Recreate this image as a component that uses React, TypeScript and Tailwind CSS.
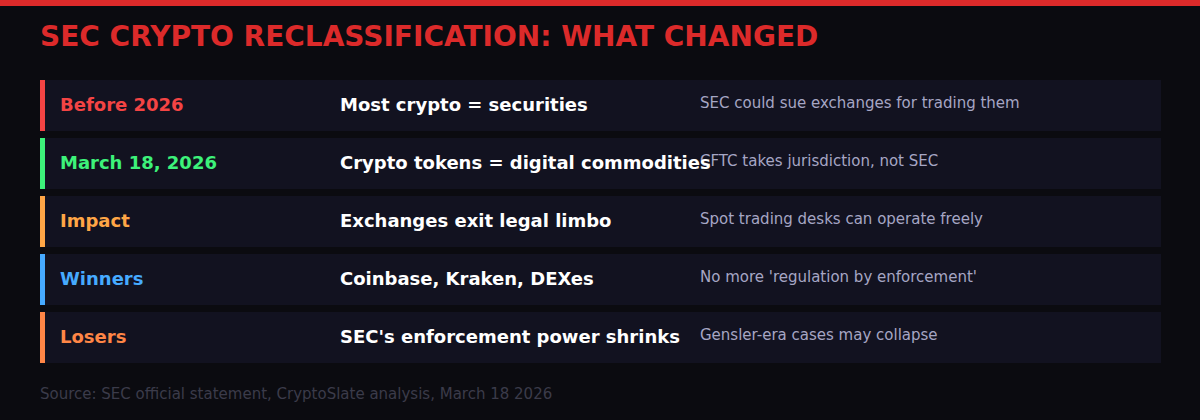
import React from 'react';

const rows = [
  { label: 'Before 2026', color: 'text-[#f44444]', bar: 'bg-[#f44444]', what: 'Most crypto = securities', note: 'SEC could sue exchanges for trading them' },
  { label: 'March 18, 2026', color: 'text-[#3df27a]', bar: 'bg-[#3df27a]', what: 'Crypto tokens = digital commodities', note: 'CFTC takes jurisdiction, not SEC' },
  { label: 'Impact', color: 'text-[#ffa646]', bar: 'bg-[#ffa646]', what: 'Exchanges exit legal limbo', note: 'Spot trading desks can operate freely' },
  { label: 'Winners', color: 'text-[#46aaff]', bar: 'bg-[#46aaff]', what: 'Coinbase, Kraken, DEXes', note: "No more 'regulation by enforcement'" },
  { label: 'Losers', color: 'text-[#ff8646]', bar: 'bg-[#ff8646]', what: "SEC's enforcement power shrinks", note: 'Gensler-era cases may collapse' },
];

export default function App() {
  return (
    <div className="w-[1200px] h-[420px] bg-[#0b0b10] overflow-hidden font-['DejaVu_Sans',sans-serif]">
      <div className="h-[6px] bg-[#dc2a2a]" />
      <div className="px-[40px]">
        <h1 className="mt-[15px] h-[32px] text-[28px] leading-[32px] font-bold text-[#dc2a2a]">
          SEC CRYPTO RECLASSIFICATION: WHAT CHANGED
        </h1>

        {/* rows */}
        <div className="mt-[27px] w-[1121px] flex flex-col gap-[7px]">
          {rows.map((r) => (
            <div key={r.label} className="h-[51px] flex bg-[#121220] whitespace-nowrap">
              <div className={`w-[5px] ${r.bar}`} />
              <div className={`w-[295px] pl-[15px] pb-[2px] flex items-center text-[18px] font-bold ${r.color}`}>
                {r.label}
              </div>
              <div className="w-[360px] pb-[2px] flex items-center text-[18px] font-bold text-white">
                <span className="relative z-10">{r.what}</span>
              </div>
              <div className="flex-1 flex items-center pb-[4px] text-[15px] text-[#a6a6c4]">
                {r.note}
              </div>
            </div>
          ))}
        </div>

        <p className="mt-[20px] text-[15px] text-[#3b3b4a]">
          Source: SEC official statement, CryptoSlate analysis, March 18 2026
        </p>
      </div>
    </div>
  );
}
